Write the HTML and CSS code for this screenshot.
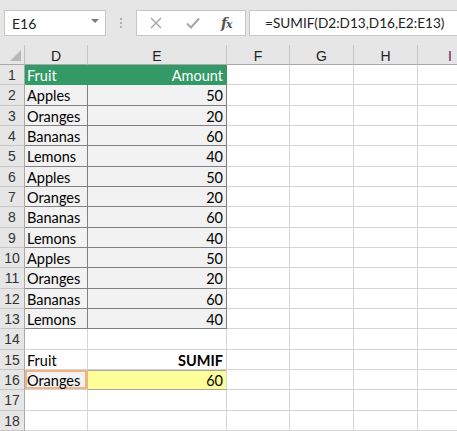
FILE: index.html
```html
<!DOCTYPE html>
<html>
<head>
<meta charset="utf-8">
<link rel="stylesheet" href="styles.css">
</head>
<body>
<div class="app">
  <div class="toolbar">
    <div class="namebox"><span class="nb-text">E16</span><span class="nb-arrow"></span></div>
    <div class="dots"><i></i><i></i><i></i></div>
    <div class="fxbox">
      <svg class="ic-x" width="12" height="12" viewBox="0 0 12 12"><path d="M1 1L11 11M11 1L1 11" stroke="#a6a6a6" stroke-width="1.4" fill="none"/></svg>
      <svg class="ic-check" width="14" height="12" viewBox="0 0 14 12"><path d="M1 6.5L5 10.5L13 1.5" stroke="#a6a6a6" stroke-width="2" fill="none"/></svg>
      <span class="ic-fx">f<span class="x">x</span></span>
    </div>
    <div class="formula">=SUMIF(D2:D13,D16,E2:E13)</div>
  </div>
  <div class="sheet">
    <div class="corner"><span class="tri"></span></div>
    <div class="ch">D</div><div class="ch">E</div><div class="ch">F</div><div class="ch">G</div><div class="ch">H</div><div class="ch last"><span class="purple">I</span></div>

    <div class="rh">1</div><div class="c th">Fruit</div><div class="c th r">Amount</div><div class="c"></div><div class="c"></div><div class="c"></div><div class="c"></div>

    <div class="rh">2</div><div class="c td">Apples</div><div class="c td r e">50</div><div class="c"></div><div class="c"></div><div class="c"></div><div class="c"></div>
    <div class="rh">3</div><div class="c td">Oranges</div><div class="c td r e">20</div><div class="c"></div><div class="c"></div><div class="c"></div><div class="c"></div>
    <div class="rh">4</div><div class="c td">Bananas</div><div class="c td r e">60</div><div class="c"></div><div class="c"></div><div class="c"></div><div class="c"></div>
    <div class="rh">5</div><div class="c td">Lemons</div><div class="c td r e">40</div><div class="c"></div><div class="c"></div><div class="c"></div><div class="c"></div>
    <div class="rh">6</div><div class="c td">Apples</div><div class="c td r e">50</div><div class="c"></div><div class="c"></div><div class="c"></div><div class="c"></div>
    <div class="rh">7</div><div class="c td">Oranges</div><div class="c td r e">20</div><div class="c"></div><div class="c"></div><div class="c"></div><div class="c"></div>
    <div class="rh">8</div><div class="c td">Bananas</div><div class="c td r e">60</div><div class="c"></div><div class="c"></div><div class="c"></div><div class="c"></div>
    <div class="rh">9</div><div class="c td">Lemons</div><div class="c td r e">40</div><div class="c"></div><div class="c"></div><div class="c"></div><div class="c"></div>
    <div class="rh">10</div><div class="c td">Apples</div><div class="c td r e">50</div><div class="c"></div><div class="c"></div><div class="c"></div><div class="c"></div>
    <div class="rh">11</div><div class="c td">Oranges</div><div class="c td r e">20</div><div class="c"></div><div class="c"></div><div class="c"></div><div class="c"></div>
    <div class="rh">12</div><div class="c td">Bananas</div><div class="c td r e">60</div><div class="c"></div><div class="c"></div><div class="c"></div><div class="c"></div>
    <div class="rh">13</div><div class="c td">Lemons</div><div class="c td r e">40</div><div class="c"></div><div class="c"></div><div class="c"></div><div class="c"></div>

    <div class="rh">14</div><div class="c"></div><div class="c"></div><div class="c"></div><div class="c"></div><div class="c"></div><div class="c"></div>
    <div class="rh">15</div><div class="c">Fruit</div><div class="c r b">SUMIF</div><div class="c"></div><div class="c"></div><div class="c"></div><div class="c"></div>
    <div class="rh">16</div><div class="c sel">Oranges</div><div class="c r yel">60</div><div class="c"></div><div class="c"></div><div class="c"></div><div class="c"></div>
    <div class="rh">17</div><div class="c"></div><div class="c"></div><div class="c"></div><div class="c"></div><div class="c"></div><div class="c"></div>
    <div class="rh">18</div><div class="c"></div><div class="c"></div><div class="c"></div><div class="c"></div><div class="c"></div><div class="c"></div>
  </div>
</div>
</body>
</html>
```

FILE: styles.css
```css
* { box-sizing: border-box; }
html, body { margin: 0; padding: 0; background: #fff; }
body { width: 457px; height: 431px; overflow: hidden; font-family: Lato, "Liberation Sans", sans-serif; }
.app { width: 457px; height: 431px; overflow: hidden; }

.toolbar {
  height: 45px;
  background: #e6e6e6;
  display: flex;
  align-items: flex-start;
  padding: 10px 0 0 4px;
}
.namebox {
  width: 102px; height: 26px;
  background: #fff;
  border: 1px solid #c6c6c6;
  display: flex; align-items: center; justify-content: space-between;
  padding: 0 6px 0 7px;
  font-size: 14px; color: #222;
}
.nb-arrow {
  width: 0; height: 0;
  border-left: 4px solid transparent;
  border-right: 4px solid transparent;
  border-top: 4px solid #7a7a7a;
  margin-top: -4px;
}
.dots {
  width: 30px; height: 26px;
  display: flex; flex-direction: column; align-items: center; justify-content: center; gap: 2px;
}
.dots i { display: block; width: 2px; height: 2px; background: #b0b0b0; }
.fxbox {
  width: 110px; height: 26px;
  background: #fff;
  border: 1px solid #c6c6c6;
  display: flex; align-items: center;
  padding-left: 13px;
}
.ic-x { margin-right: 24px; }
.ic-check { margin-right: 21px; }
.ic-fx { font-family: "DejaVu Serif", "Liberation Serif", serif; font-style: italic; font-size: 14px; color: #555; font-weight: bold; letter-spacing: -1px; }
.ic-fx .x { font-size: 11px; }
.formula {
  flex: 1;
  margin-left: 3px;
  height: 26px;
  background: #fff;
  border: 1px solid #c6c6c6;
  border-right: none;
  padding-left: 15px;
  font-size: 13.6px; line-height: 24px; color: #222;
  white-space: nowrap;
  overflow: hidden;
}

.sheet {
  display: grid;
  grid-template-columns: 25px 63px 139px 63px 64px 64px 64px;
  grid-template-rows: 20px;
  grid-auto-rows: 20.33px;
  font-size: 14.5px;
  color: #000;
}
.corner {
  background: #e6e6e6;
  border-right: 1px solid #c0c0c0;
  border-bottom: 1px solid #a8a8a8;
  position: relative;
}
.tri {
  position: absolute; right: 3px; bottom: 3px;
  width: 0; height: 0;
  border-left: 11px solid transparent;
  border-bottom: 11px solid #b8b8b8;
}
.ch {
  background: #e6e6e6;
  border-right: 1px solid #c6c6c6;
  border-bottom: 1px solid #a8a8a8;
  text-align: center;
  font-size: 14px; line-height: 21px; color: #222;
  font-family: "Liberation Sans", sans-serif;
  padding-top: 1px;
}
.ch.last { border-right: none; }
.purple { color: #6b1a5a; }
.rh {
  background: #e6e6e6;
  border-right: 1px solid #a8a8a8;
  border-bottom: 1px solid #c6c6c6;
  text-align: center;
  font-size: 14px; line-height: 21px; color: #333;
  font-family: "Liberation Sans", sans-serif;
}
.c {
  border-right: 1px solid #d4d4d4;
  border-bottom: 1px solid #d4d4d4;
  padding: 0 3px 0 2px;
  line-height: 21px;
  white-space: nowrap;
  overflow: hidden;
}
.r { text-align: right; }
.b { font-weight: bold; }
.th { background: #339966; color: #fff; border-color: #339966; }
.td { background: #f2f2f2; border-right: 1px solid #808080; border-bottom: 1px solid #808080; }
.sel { background: #f2f2f2; box-shadow: inset 0 0 0 2px #f4b183; border-right-color: #f4b183; }
.yel { background: #ffff99; border-bottom: 1px solid #a6a6a6; box-shadow: inset 0 1px 0 #a6a6a6; }
```
